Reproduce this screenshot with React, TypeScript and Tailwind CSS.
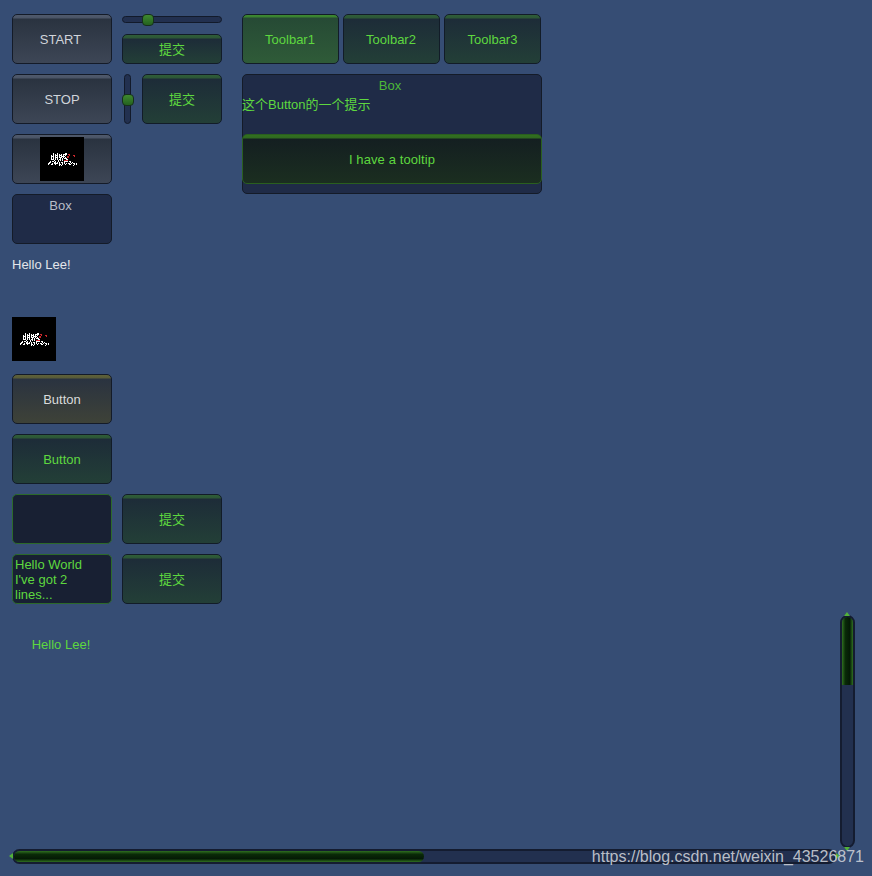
import type { ReactNode } from "react";

const sans = "font-['Liberation_Sans','Noto_Sans_CJK_SC',sans-serif]";

// button skins: top strip + body gradient
const skins = {
  grey: "border-[#141b28] text-[#d0d4da] bg-[linear-gradient(#505a6c_0px,#4a5466_3px,#2a3340_4px,#3d4656_100%)]",
  green: "border-[#121c28] text-[#5ed83f] bg-[linear-gradient(#2f5d38_0px,#2c5636_3px,#1d2c38_4px,#233f37_100%)]",
  active: "border-[#121c28] text-[#5ed83f] bg-[linear-gradient(#3d8a30_0px,#39802f_2px,#264a35_3px,#2f5b38_100%)]",
  yellow: "border-[#141b28] text-[#dadcdb] bg-[linear-gradient(#5e6139_0px,#575a38_3px,#2a3340_4px,#3e4238_100%)]",
  hover: "border-[#2a5f1f] text-[#5ed83f] bg-[linear-gradient(#32701f_0px,#2f6820_3px,#141f21_4px,#1b2e20_100%)]",
};

function Btn({ skin, className = "", children }: { skin: keyof typeof skins; className?: string; children?: ReactNode }) {
  return (
    <div className={`flex items-center justify-center border rounded-[5px] text-[13px] leading-none ${skins[skin]} ${className}`}>
      {children}
    </div>
  );
}

// the little noisy texture used on the image button and label
const noise = [
  ".....#...#.......##..........",
  ".....#.#.#.#.#.####.rr.......",
  "...#.#.###.###.#.#...r...rr..",
  "...###.#.#.#.####..rr.....r..",
  "...#.#.###.###.#.#.rr........",
  "...#.#.#.#..#.#.###..........",
  "...###.#.#.##.#...##.........",
  "......#...#.#.#.rrrr.........",
  "..#.##.#..#.....####.##......",
  ".##...##.#.#.##.#.....#.#....",
  "##..#.####.#..#.#.#.##.#.##.#",
  "#..##..#...##.#..#...##...#.#",
  "...........#.#...........#...",
];

function Noise() {
  return (
    <svg width="44" height="44" viewBox="0 0 44 44" className="block shrink-0">
      <rect width="44" height="44" fill="#000" />
      {noise.map((row, y) =>
        row.split("").map((c, x) =>
          c !== "." ? (
            <rect
              key={`${x}-${y}`}
              x={x + 8}
              y={y + 16}
              width="1"
              height="1"
              fill={c === "r" ? "#c8282c" : "#fff"}
            />
          ) : null
        )
      )}
    </svg>
  );
}

function HSlider() {
  return (
    <div className="relative h-[20px] w-[100px]">
      <div className="mt-[2px] h-[7px] rounded-full border border-[#121a2a] bg-[#22304f]" />
      <div className="absolute left-[20px] top-0 h-[12px] w-[12px] rounded-[4px] border border-[#16301c] bg-[linear-gradient(#3f8a2f,#24611f)]" />
    </div>
  );
}

function VSlider() {
  return (
    <div className="relative h-[50px] w-[12px]">
      <div className="ml-[2px] h-full w-[7px] rounded-full border border-[#121a2a] bg-[#22304f]" />
      <div className="absolute left-0 top-[20px] h-[12px] w-[12px] rounded-[4px] border border-[#16301c] bg-[linear-gradient(#3f8a2f,#24611f)]" />
    </div>
  );
}

export default function App() {
  return (
    <div className={`relative h-[876px] w-[872px] overflow-hidden bg-[#364d74] ${sans}`}>
      <div className="flex gap-[10px] pl-[12px] pt-[14px]">
        {/* First column */}
        <div className="flex w-[100px] flex-col gap-[10px]">
          <Btn skin="grey" className="h-[50px] pr-[3px]">START</Btn>
          <Btn skin="grey" className="h-[50px]">STOP</Btn>
          <Btn skin="grey" className="h-[50px]"><Noise /></Btn>
          <div className="h-[50px] rounded-[5px] border border-[#141b28] bg-[#1f2b47] pr-[3px] pt-[3px] text-center text-[13px] leading-[15px] text-[#b9bec7]">
            Box
          </div>
          <div className="h-[20px] pt-[1px] text-[13px] leading-[20px] text-[#e4e6ea]">Hello Lee!</div>
          <div className="mt-[33px]"><Noise /></div>
          <div className="mt-[3px] flex flex-col gap-[10px]">
            <Btn skin="yellow" className="h-[50px]">Button</Btn>
            <Btn skin="green" className="h-[50px]">Button</Btn>
            <div className="h-[50px] rounded-[5px] border border-[#2c6a2a] bg-[#182033]" />
            <div className="h-[50px] overflow-hidden rounded-[5px] border border-[#2c6a2a] bg-[#182033] pl-[2px] pt-[2px] text-[13px] leading-[15px] text-[#5ed83f]">
              Hello World<br />I've got 2<br />lines...
            </div>
          </div>
          <div className="mt-[20px] h-[20px] pl-[1px] pr-[3px] pt-[1px] text-center text-[13px] leading-[20px] text-[#5ed83f]">Hello Lee!</div>
        </div>

        {/* Second column */}
        <div className="flex w-[100px] flex-col">
          <HSlider />
          <Btn skin="green" className="h-[30px] pt-[1px]">提交</Btn>
          <div className="mt-[10px] flex items-start justify-between">
            <VSlider />
            <Btn skin="green" className="h-[50px] w-[80px]">提交</Btn>
          </div>
          <div className="mt-[370px] flex flex-col gap-[10px]">
            <Btn skin="green" className="h-[50px]">提交</Btn>
            <Btn skin="green" className="h-[50px]">提交</Btn>
          </div>
        </div>

        {/* Toolbar and tooltip box */}
        <div className="ml-[10px] flex w-[300px] flex-col gap-[10px]">
          <div className="flex gap-[4px]">
            <Btn skin="active" className="h-[50px] w-[97px] pr-[1px]">Toolbar1</Btn>
            <Btn skin="green" className="h-[50px] w-[97px] pr-[1px]">Toolbar2</Btn>
            <Btn skin="green" className="h-[50px] w-[97px]">Toolbar3</Btn>
          </div>
          <div className="h-[120px] rounded-[5px] border border-[#141b28] bg-[#1f2b47] text-[13px] text-[#5ed83f]">
            <div className="pr-[4px] pt-[3px] text-center leading-[15px] text-[#4cb838]">Box</div>
            <div className="ml-[-1px] mt-[4px] leading-[15px]">这个Button的一个提示</div>
            <Btn skin="hover" className="mx-[-1px] mt-[22px] h-[50px] pt-[1px] tracking-[0.1px]">I have a tooltip</Btn>
          </div>
        </div>
      </div>

      {/* Scrollbars sit over the page */}
      <div className="absolute left-[840px] top-[615px] h-[233px] w-[15px] rounded-b-full rounded-t-full border-2 border-[#141c30] bg-[#22304f]">
        <div className="h-[68px] rounded-b-[4px] rounded-t-full bg-[linear-gradient(90deg,#2f7020,#0a2a08_30%,#041a05_70%,#2f7020)]" />
      </div>
      <div className="absolute left-[844px] top-[612px] h-0 w-0 border-x-[3.5px] border-b-[4px] border-x-transparent border-b-[#52b23a]" />
      <div className="absolute left-[844px] top-[847px] h-0 w-0 border-x-[3.5px] border-t-[4px] border-x-transparent border-t-[#52b23a]" />

      <div className="absolute left-[12px] top-[849px] h-[15px] w-[824px] rounded-full border-2 border-[#141c30] bg-[#22304f]">
        <div className="h-full w-[410px] rounded-full bg-[linear-gradient(#2f7020,#0a2a08_30%,#041a05_70%,#2f7020)]" />
      </div>
      <div className="absolute left-[9px] top-[853px] h-0 w-0 border-y-[3.5px] border-r-[4px] border-y-transparent border-r-[#52b23a]" />
      <div className="absolute left-[836px] top-[853px] h-0 w-0 border-y-[3.5px] border-l-[4px] border-y-transparent border-l-[#52b23a]" />

      <div className="absolute right-[8px] top-[848px] text-[16px] leading-[18px] text-[#cdd1d8]/90">
        https://blog.csdn.net/weixin_43526871
      </div>
    </div>
  );
}
